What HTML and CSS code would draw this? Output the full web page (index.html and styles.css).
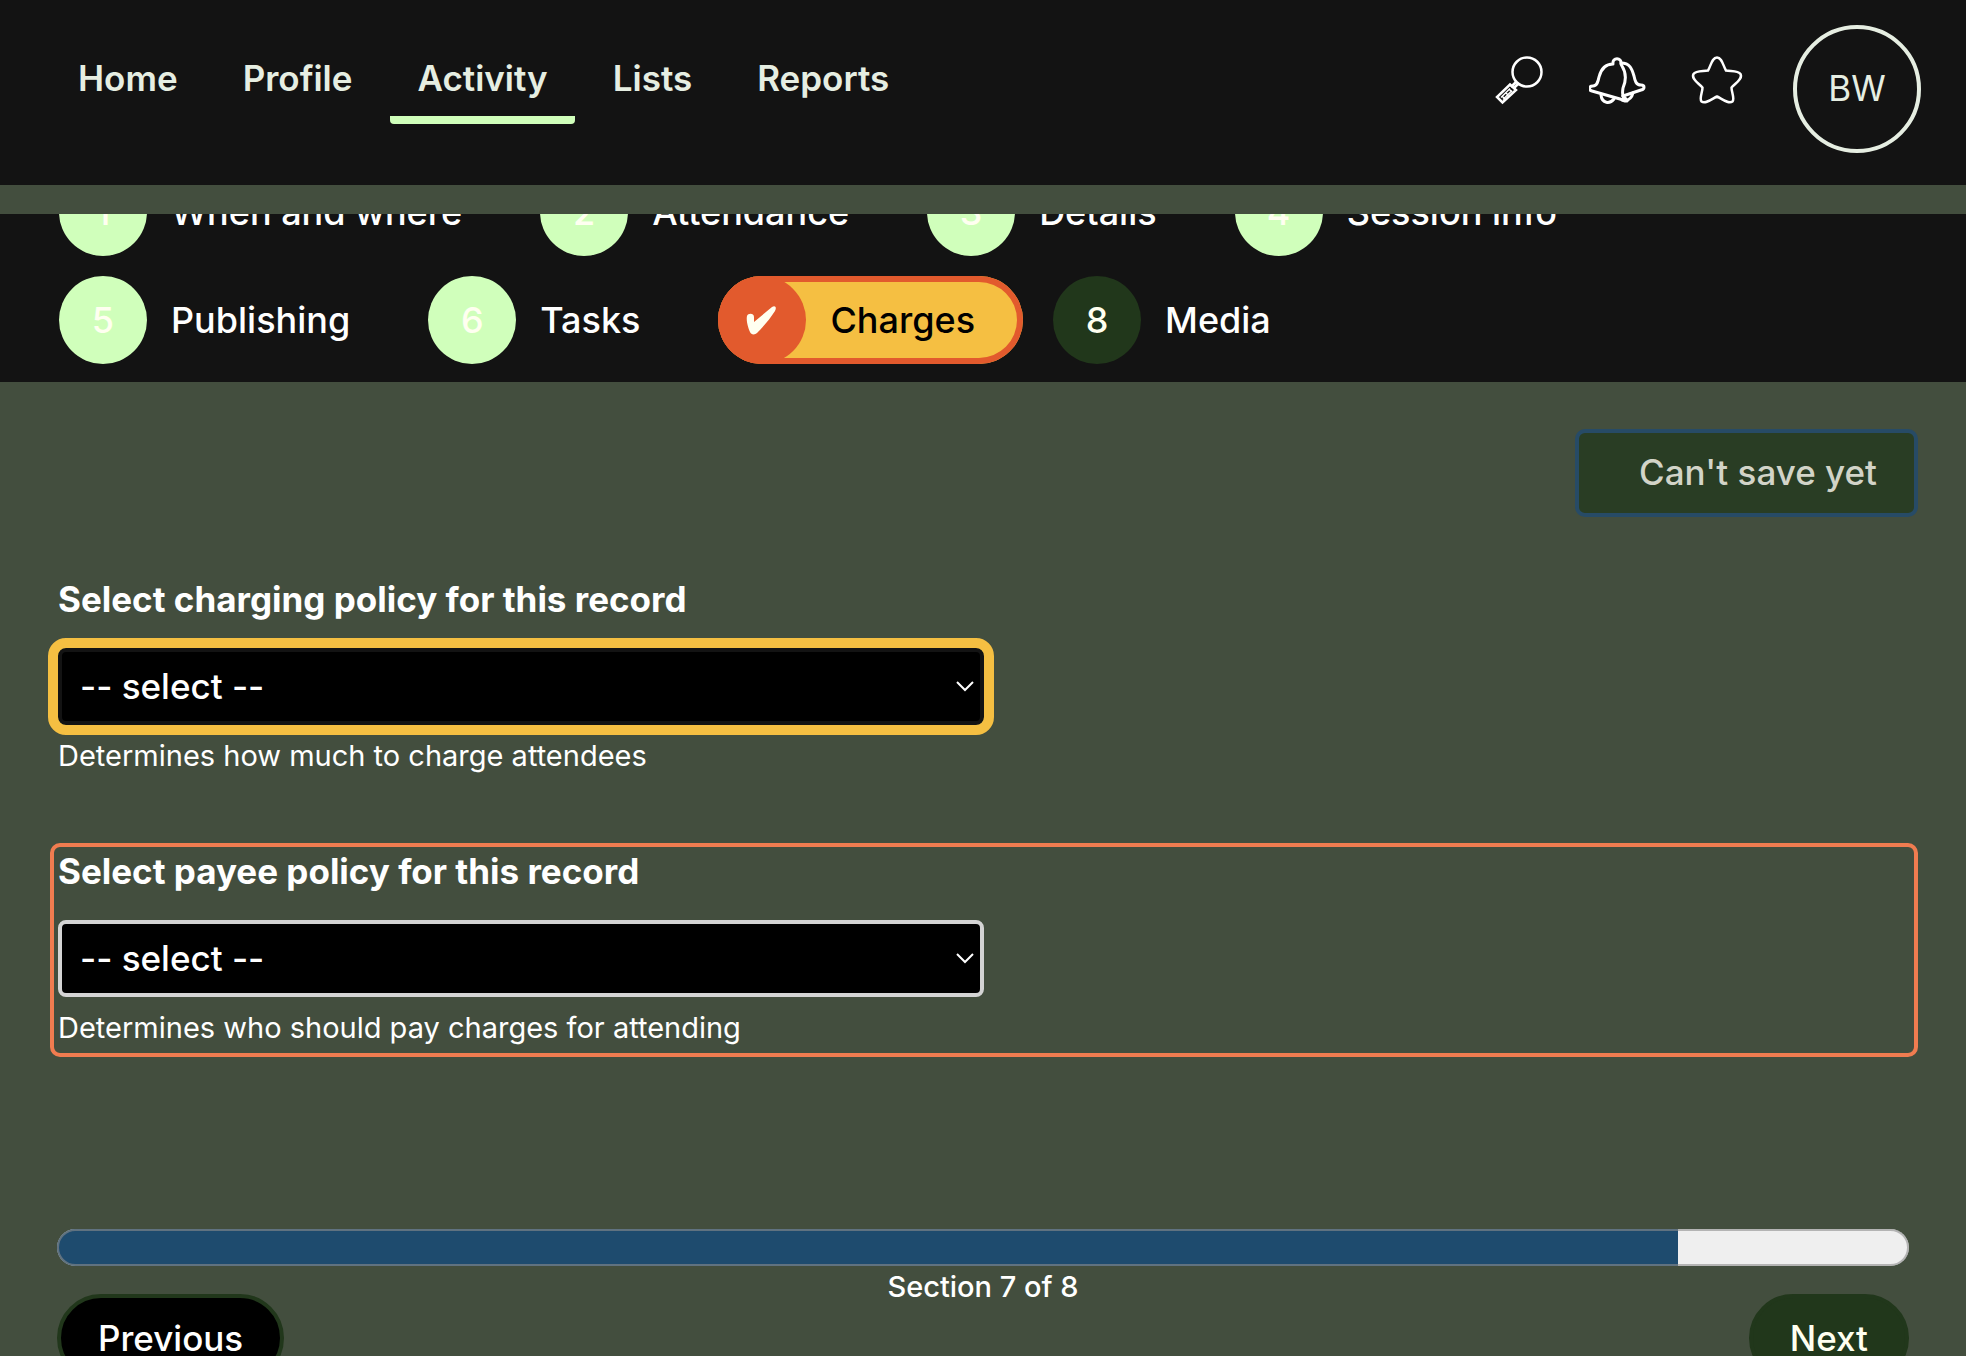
FILE: index.html
```html
<!DOCTYPE html>
<html lang="en">
<head>
<meta charset="utf-8">
<meta name="viewport" content="width=device-width, initial-scale=1">
<title>Activity - Charges</title>
<link rel="stylesheet" href="styles.css">
</head>
<body>
<header class="topbar">
  <nav class="nav" aria-label="Main">
    <a class="nav-link" href="#home">Home</a>
    <a class="nav-link" href="#profile">Profile</a>
    <a class="nav-link nav-link-active" href="#activity" aria-current="page">Activity</a>
    <a class="nav-link" href="#lists">Lists</a>
    <a class="nav-link" href="#reports">Reports</a>
  </nav>
  <div class="tools">
    <div class="tool-icons">
      <button class="tool" type="button" aria-label="Search">
        <svg width="52" height="52" viewBox="0 0 52 52" fill="none" stroke="currentColor" stroke-width="2.500">
          <circle cx="32" cy="17" r="14.5"/>
          <path d="M21 27 16 32M23 29l-4.500 4.500"/>
          <path d="M15 29.500 21 35 7.500 47.500 2 42z"/>
          <path d="M15 33.500 6 42.500M17 35.500 8 44.500M14 34l3 3M10.500 37.500l3 3M7 41l3 3" stroke-width="1.500"/>
        </svg>
      </button>
      <button class="tool" type="button" aria-label="Notifications">
        <svg width="60" height="52" viewBox="5 0 60 52" fill="none" stroke="currentColor" stroke-width="3" stroke-linejoin="round" stroke-linecap="round">
          <path d="M29 9c-1-7 9-7 8 0l1 2c5 8 4 15 1 22-1 6-1 11 4 13L8 36c-4-1-3-5 1-5 4 0 5-4 6-9 2-8 6-13 14-13z"/>
          <path d="M37 8c9 0 11 6 13 13 1 5 2 9 7 9 4 0 4 4 0 5l-18 6"/>
          <path d="M17 40c1 9 9 9 13 4M38 45l3 1c5-1 7-4 8-8M39 41l4 4"/>
        </svg>
      </button>
      <button class="tool" type="button" aria-label="Favourites">
        <svg width="52" height="52" viewBox="0 1 52 52" fill="none" stroke="currentColor" stroke-width="2.500" stroke-linejoin="round">
          <path d="M26 3.500c-5 0-6 8-9 13-5 1-12 0-14.500 3.500-2.500 5 5 9 9 13.500 0 5-3.500 11-1 14 4 3 11-3 15.500-5 4.500 2 11.500 8 15.500 5 2.500-3-1-9-1-14 4-4.500 11.500-8.500 9-13.500C47 16.500 40 17.500 35 16.500c-3-5-4-13-9-13z"/>
        </svg>
      </button>
    </div>
    <button class="avatar" type="button" aria-label="Account BW">BW</button>
  </div>
</header>

<section class="steps" aria-label="Sections">
  <ol class="step-list">
    <li class="step"><span class="step-num">1</span><span class="step-name">When and where</span></li>
    <li class="step"><span class="step-num">2</span><span class="step-name">Attendance</span></li>
    <li class="step"><span class="step-num">3</span><span class="step-name">Details</span></li>
    <li class="step"><span class="step-num">4</span><span class="step-name">Session info</span></li>
    <li class="step"><span class="step-num">5</span><span class="step-name">Publishing</span></li>
    <li class="step"><span class="step-num">6</span><span class="step-name">Tasks</span></li>
    <li class="step step-current" aria-current="step"><span class="step-num">
      <svg width="32" height="30" viewBox="0 0 32 30" aria-hidden="true"><path fill="currentColor" d="M1 11c1-3 7-3 7 1v5L26 2c3-2 5 0 3 4-5 8-12 16-18 22-2 2-6 2-7-1C2 23 0 15 1 11z"/></svg>
    </span><span class="step-name">Charges</span></li>
    <li class="step step-todo"><span class="step-num">8</span><span class="step-name">Media</span></li>
  </ol>
</section>

<main class="content">
  <div class="actions">
    <button class="save" type="button" disabled>Can't save yet</button>
  </div>
  <form class="form">
    <div class="field">
      <label class="label" for="charging">Select charging policy for this record</label>
      <div class="picker">
        <select class="select select-focus" id="charging"><option>-- select --</option></select>
        <svg class="chevron" width="18" height="12" viewBox="0 0 18 12" fill="none" stroke="currentColor" stroke-width="2" aria-hidden="true"><path d="M1 2l8 8 8-8"/></svg>
      </div>
      <p class="hint">Determines how much to charge attendees</p>
    </div>
    <div class="field field-invalid">
      <label class="label" for="payee">Select payee policy for this record</label>
      <div class="picker">
        <select class="select" id="payee"><option>-- select --</option></select>
        <svg class="chevron" width="18" height="12" viewBox="0 0 18 12" fill="none" stroke="currentColor" stroke-width="2" aria-hidden="true"><path d="M1 2l8 8 8-8"/></svg>
      </div>
      <p class="hint">Determines who should pay charges for attending</p>
    </div>
  </form>
  <footer class="pager">
    <progress class="progress" id="section" max="8" value="7"></progress>
    <label class="progress-label" for="section">Section 7 of 8</label>
    <div class="pager-buttons">
      <button class="pill pill-outline" type="button">Previous</button>
      <button class="pill" type="button">Next</button>
    </div>
  </footer>
</main>
</body>
</html>
```
FILE: styles.css
```css
* { box-sizing: border-box; }

html { scrollbar-width: none; }

body {
  margin: 0;
  background: #434e3e;
  color: #fff;
  font-family: Inter, "Liberation Sans", sans-serif;
  font-size: 35px;
  font-weight: 500;
  line-height: 44px;
}

button, select {
  font: inherit;
  color: inherit;
  margin: 0;
}

.topbar {
  display: flex;
  justify-content: space-between;
  align-items: flex-start;
  padding: 25px 45px 32px 51px;
  background: #131313;
  color: #e6eee2;
}

.nav {
  display: flex;
  gap: 11px;
  padding-top: 7px;
}

.nav-link {
  padding: 24px 27px 16px;
  border-bottom: 8px solid transparent;
  border-radius: 4px;
  color: inherit;
  font-weight: 600;
  text-decoration: none;
}

.nav-link-active { border-bottom-color: #d0ffbb; }

.tools {
  display: flex;
  align-items: center;
  gap: 50px;
}

.tool-icons {
  display: flex;
  gap: 42px;
  padding-bottom: 16px;
}

.tool {
  display: flex;
  padding: 0;
  border: 0;
  background: none;
  color: #fff;
}

.avatar {
  width: 128px;
  height: 128px;
  padding: 0 0 2px;
  border: 4px solid #e6eee2;
  border-radius: 50%;
  background: none;
  font-weight: 400;
}

.steps {
  margin-top: 29px;
  padding: 0 59px 18px;
  overflow: hidden;
  background: #131313;
}

.step-list {
  display: flex;
  flex-wrap: wrap;
  gap: 20px 30px;
  max-width: 1600px;
  margin: -46px 0 0;
  padding: 0;
  list-style: none;
  font-size: 36px;
}

.step {
  display: flex;
  align-items: center;
  gap: 24px;
  padding-right: 48px;
  border-radius: 44px;
}

.step-num {
  display: flex;
  align-items: center;
  justify-content: center;
  width: 88px;
  height: 88px;
  border-radius: 50%;
  background: #d0ffbb;
  color: #fffff0;
}

.step-current {
  background: #f5bf42;
  box-shadow: inset 0 0 0 6px #e25a2d;
  color: #000;
}

.step-current .step-num { background: #e25a2d; }

.step-todo .step-num { background: #21371b; }

.content { padding: 47px 48px 0 50px; }

.actions {
  display: flex;
  justify-content: flex-end;
}

.save {
  padding: 17px 37px 19px 60px;
  border: 4px solid #274b66;
  border-radius: 10px;
  background: #293d24;
  color: #d2d4c8;
}

.form { padding-top: 54px; }

.field {
  padding: 2px 4px 9px;
  border: 4px solid transparent;
  border-radius: 10px;
}

.field + .field { margin-top: 58px; }

.field-invalid { border-color: #f07c50; }

.label {
  display: block;
  font-weight: 700;
}

.picker {
  position: relative;
  width: 50%;
  margin: 27px 0 15px;
}

.select {
  display: block;
  width: 100%;
  height: 77px;
  padding: 0 18px 2px;
  border: 4px solid #d4d4d4;
  border-radius: 8px;
  appearance: none;
  background: #000;
}

.select-focus {
  border-color: #131313;
  outline: 10px solid #f5bf42;
}

.chevron {
  position: absolute;
  top: 32px;
  right: 10px;
  pointer-events: none;
}

.hint {
  margin: 0;
  font-size: 29px;
  font-weight: 400;
  line-height: 32px;
}

.pager {
  display: flex;
  flex-direction: column;
  align-items: center;
  padding: 172px 9px 0 7px;
}

.progress {
  display: block;
  width: 100%;
  height: 37px;
  border: 0;
  border-radius: 19px;
  overflow: hidden;
  appearance: none;
  background: #efefef;
  outline: 2px solid rgba(140, 140, 140, 0.6);
  outline-offset: -2px;
}

.progress::-webkit-progress-bar { background: #efefef; }

.progress::-webkit-progress-value { background: #1e4b6e; }

.progress-label {
  padding-top: 5px;
  font-size: 29px;
  line-height: 32px;
}

.pager-buttons {
  display: flex;
  align-self: stretch;
  justify-content: space-between;
  margin-top: -9px;
}

.pill {
  padding: 18px 37px;
  border: 4px solid #21371b;
  border-radius: 44px;
  background: #21371b;
  color: #fffff0;
}

.pill-outline {
  background: #000;
  color: #fff;
}
```
